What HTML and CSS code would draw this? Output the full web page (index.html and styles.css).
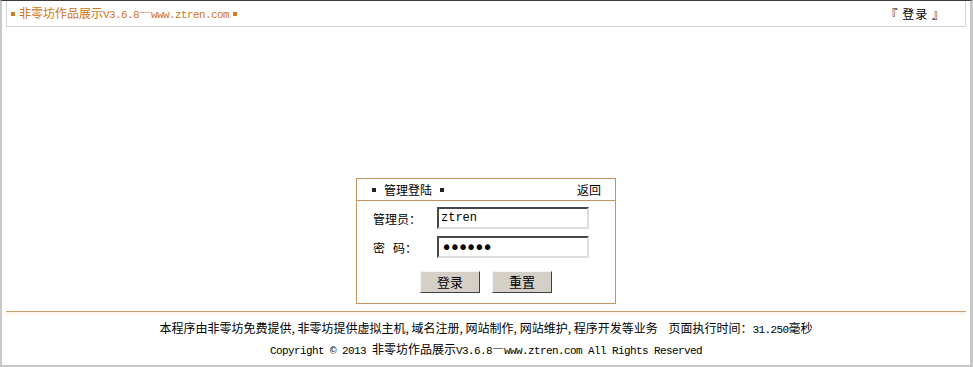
FILE: index.html
```html
<!DOCTYPE html>
<html lang="zh-CN">
<head>
    <meta charset="UTF-8">
    <title>非零坊作品展示V3.6.8</title>
    <link rel="stylesheet" href="styles.css">
</head>
<body>

<div class="frame">
    <div class="topbar">
        <div class="site-name">
            <span class="dot"></span>
            <span>非零坊作品展示<span class="en">V3.6.8</span>—<span class="en">www.ztren.com</span></span>
            <span class="dot"></span>
        </div>
        <a class="login-link" href="#">『&nbsp;登录&nbsp;』</a>
    </div>

    <div class="login-box">
        <div class="login-head">
            <div class="login-title">
                <span class="dot dark"></span>
                <span>管理登陆</span>
                <span class="dot dark"></span>
            </div>
            <a href="#">返回</a>
        </div>
        <form class="login-form" onsubmit="return false;">
            <label for="user">管理员：</label>
            <input type="text" id="user" value="ztren">
            <label for="pass">密&nbsp;&nbsp;&nbsp;码：</label>
            <input type="password" id="pass" class="pass" value="123456">
            <div class="buttons">
                <button type="submit">登录</button>
                <button type="reset">重置</button>
            </div>
        </form>
    </div>

    <div class="footer">
        <p>本程序由非零坊免费提供, 非零坊提供虚拟主机, 域名注册, 网站制作, 网站维护, 程序开发等业务&nbsp;&nbsp;&nbsp;&nbsp;页面执行时间：<span class="en">31.250</span>毫秒</p>
        <p><span class="en">Copyright © 2013 </span>非零坊作品展示<span class="en">V3.6.8</span>—<span class="en">www.ztren.com All Rights Reserved</span></p>
    </div>
</div>

</body>
</html>
```

FILE: styles.css
```css
html, body {
    margin: 0;
    padding: 0;
    background: #fff;
}
body {
    font-family: "Noto Sans CJK SC", "DejaVu Sans", sans-serif;
    font-size: 12px;
    color: #000;
}
a {
    color: #000;
    text-decoration: none;
}
.en {
    font-family: "Liberation Mono", monospace;
    font-size: 11px;
    letter-spacing: -0.6px;
    line-height: 1;
}
.frame {
    box-sizing: border-box;
    width: 973px;
    height: 367px;
    border-top: 1px solid #3a3a3a;
    border-left: 2px solid #c8c8c8;
    border-right: 3px solid #c8c8c8;
    border-bottom: 2px solid #c8c8c8;
    padding: 0 4px;
}
.dot {
    display: inline-block;
    width: 4px;
    height: 4px;
    background: #d07a22;
    vertical-align: middle;
}
.dot.dark {
    background: #222;
}
.topbar {
    display: flex;
    justify-content: space-between;
    align-items: center;
    height: 25px;
    border: 1px solid #d4d4d4;
    border-top: none;
    padding: 0 20px 0 4px;
}
.site-name {
    display: flex;
    align-items: center;
    gap: 4px;
    color: #cf7520;
    line-height: 14px;
}
.login-link {
    letter-spacing: 1px;
}
.login-box {
    width: 258px;
    margin: 151px auto 0;
    border: 1px solid #c8935a;
}
.login-head {
    display: flex;
    justify-content: space-between;
    align-items: center;
    height: 21px;
    padding: 0 14px 0 15px;
    border-bottom: 1px solid #c8935a;
    line-height: 14px;
}
.login-title {
    display: flex;
    align-items: center;
    gap: 8px;
}
.login-form {
    display: grid;
    grid-template-columns: 64px 152px;
    row-gap: 7px;
    align-items: center;
    padding: 6px 0 10px 16px;
    margin: 0;
}
.login-form input {
    box-sizing: border-box;
    width: 152px;
    height: 22px;
    padding: 0 2px;
    border: 2px solid;
    border-color: #474747 #dcdcdc #dcdcdc #474747;
    font-family: "Liberation Mono", monospace;
    font-size: 12px;
    color: #000;
    background: #fff;
    outline: none;
}
.login-form input.pass {
    font-family: "DejaVu Sans", sans-serif;
    font-size: 19px;
    letter-spacing: -3px;
}
.buttons {
    grid-column: 1 / 3;
    display: flex;
    gap: 12px;
    padding-left: 47px;
    margin-top: 6px;
}
.buttons button {
    width: 60px;
    height: 22px;
    padding: 0;
    background: #d4d0c8;
    border: 1px solid;
    border-color: #f4f4f4 #404040 #404040 #f4f4f4;
    font-family: "Noto Sans CJK SC", sans-serif;
    font-size: 13px;
    line-height: 18px;
    color: #000;
    cursor: pointer;
}
.footer {
    margin-top: 7px;
    border-top: 1px solid #c8a06c;
    box-shadow: inset 0 4px 4px -2px #fdf1e2;
    text-align: center;
}
.footer p {
    margin: 0;
    height: 21px;
    line-height: 21px;
}
.footer p:first-child {
    padding-top: 5px;
}
```
